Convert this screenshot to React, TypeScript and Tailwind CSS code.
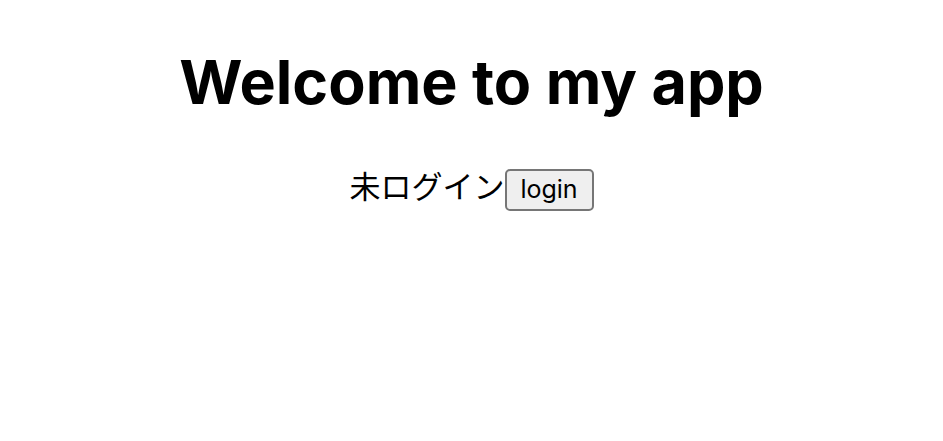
export default function App() {
  return (
    <div className="w-full text-center text-black bg-white" style={{ fontFamily: 'Inter, "Noto Sans CJK JP", sans-serif' }}>
      <h1 className="pt-[42px] text-[61px] leading-[80px] font-bold">Welcome to my app</h1>
      <div className="mt-[45px] flex items-baseline justify-center">
        <span className="text-[31px] leading-[40px]">未ログイン</span>
        <button className="w-[89px] h-[42px] text-[25px] leading-none bg-[#efefef] border-2 border-[#767676] rounded-[5px]">login</button>
      </div>
    </div>
  );
}
